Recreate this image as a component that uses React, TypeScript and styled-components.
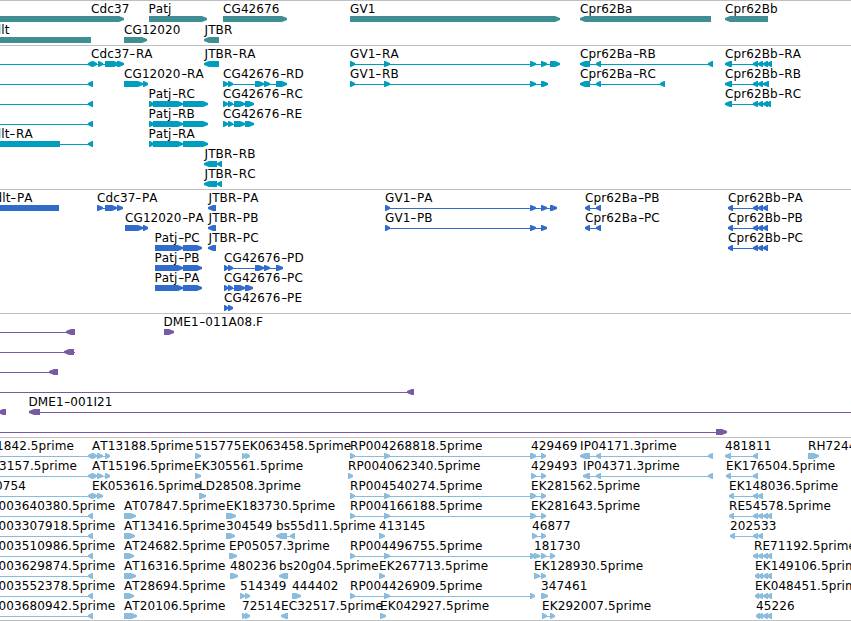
import React from 'react';
import styled, { createGlobalStyle } from 'styled-components';

type Exon = [number, number];

interface Feature {
  name?: string;
  x?: number;
  reverse?: boolean;
  exons: Exon[];
  span?: Exon;
}

interface TrackData {
  id: string;
  color: string;
  pitch: number;
  bottom: number;
  rows: Feature[][];
}

const TIP = 5;

// forward feature, label starts at the first exon unless x is given
const fwd = (name: string, exons: Exon[], x?: number): Feature => ({ name, exons, x });
const rev = (name: string, exons: Exon[], x?: number): Feature => ({ name, exons, x, reverse: true });

// feature that runs off the left edge, its last exon ends at b
const tail = (name: string, a: number, b: number, x?: number): Feature => ({
  name, x, reverse: true, exons: [[a, b]], span: [-10, b],
});

const cprRA: Exon[] = [[753, 758], [758, 763], [763, 768], [767, 772]];
const cprPA: Exon[] = [[728, 733], [753, 758], [758, 763], [763, 768]];
const patjR: Exon[] = [[149, 154], [153, 183], [183, 208]];
const patjP: Exon[] = [[155, 183], [183, 202]];
const cg426R: Exon[] = [[223, 228], [228, 233], [234, 245], [245, 254]];
const rpLong: Exon[] = [[350, 355], [384, 390], [530, 536]];

const tracks: TrackData[] = [
  {
    id: 'gene',
    color: '#3f8e94',
    pitch: 21,
    bottom: 1,
    rows: [
      [
        fwd('Cdc37', [[-10, 124]], 91), fwd('Patj', [[149, 207]], 148.5), fwd('CG42676', [[223, 287]]),
        fwd('GV1', [[350, 560]]), rev('Cpr62Ba', [[580, 711]]), rev('Cpr62Bb', [[725, 768]]),
      ],
      [rev('dlt', [[-10, 91]], -6.5), fwd('CG12020', [[124, 147]]), rev('JTBR', [[204, 219]], 204.5)],
    ],
  },
  {
    id: 'transcript',
    color: '#009dbf',
    pitch: 20,
    bottom: 2,
    rows: [
      [
        tail('', 88, 93), fwd('Cdc37-RA', [[92, 97], [98, 103], [105, 119], [117, 124]], 91),
        rev('JTBR-RA', [[204, 219]], 204.5),
        fwd('GV1-RA', [[350, 355], [384, 390], [530, 536], [541, 547], [550, 560]]),
        rev('Cpr62Ba-RB', [[580, 590], [596, 601], [708, 713]]),
        rev('Cpr62Bb-RA', [[725, 732], ...cprRA]),
      ],
      [
        tail('', 88, 93), fwd('CG12020-RA', [[124, 143], [143, 148]]),
        fwd('CG42676-RD', [[223, 228], [228, 233], [255, 264], [264, 270], [276, 287]]),
        fwd('GV1-RB', [[350, 355], [384, 390], [530, 536], [541, 548]]),
        rev('Cpr62Ba-RC', [[580, 590], [596, 601], [660, 665]]),
        rev('Cpr62Bb-RB', [[725, 732], [753, 758], [758, 763], [763, 769]]),
      ],
      [
        tail('', 88, 93), fwd('Patj-RC', patjR, 148.5), fwd('CG42676-RC', cg426R),
        rev('Cpr62Bb-RC', [[725, 732], [753, 758], [758, 763], [763, 768], [766, 771]]),
      ],
      [tail('', 88, 93), fwd('Patj-RB', patjR, 148.5), fwd('CG42676-RE', cg426R)],
      [rev('dlt-RA', [[-10, 60], [88, 93]], -6.5), fwd('Patj-RA', patjR, 148.5)],
      [rev('JTBR-RB', [[204, 217], [217, 222]], 204.5)],
      [rev('JTBR-RC', [[204, 217], [217, 222]], 204.5)],
    ],
  },
  {
    id: 'protein',
    color: '#316ccc',
    pitch: 20,
    bottom: 2,
    rows: [
      [
        rev('dlt-PA', [[-10, 59]], -5.5), fwd('Cdc37-PA', [[97, 103], [105, 117], [117, 123]]),
        rev('JTBR-PA', [[208, 216]], 208.5),
        fwd('GV1-PA', [[385, 390], [530, 536], [541, 547], [550, 557]]),
        rev('Cpr62Ba-PB', [[585, 590], [596, 601]]), rev('Cpr62Bb-PA', cprPA),
      ],
      [
        fwd('CG12020-PA', [[125, 143], [143, 148]]), rev('JTBR-PB', [[208, 216]], 208.5),
        fwd('GV1-PB', [[385, 390], [530, 536], [541, 547]]),
        rev('Cpr62Ba-PC', [[585, 590], [596, 601]]), rev('Cpr62Bb-PB', cprPA),
      ],
      [fwd('Patj-PC', patjP, 154.5), rev('JTBR-PC', [[208, 216]], 208.5), rev('Cpr62Bb-PC', cprPA)],
      [fwd('Patj-PB', patjP, 154.5), fwd('CG42676-PD', [[224, 228], [228, 233], [255, 264], [264, 270], [276, 283]])],
      [fwd('Patj-PA', patjP, 154.5), fwd('CG42676-PC', [[224, 228], [228, 233], [234, 245], [245, 253]])],
      [fwd('CG42676-PE', [[224, 228], [228, 233]])],
    ],
  },
  {
    id: 'insertion',
    color: '#7759a6',
    pitch: 20,
    bottom: 2,
    rows: [
      [tail('', 66, 75), fwd('DME1-011A08.F', [[164, 174]], 163.5)],
      [{ reverse: true, exons: [[64, 74]], span: [-10, 75] }],
      [tail('', 49, 58)],
      [tail('', 407, 414)],
      [rev('', [[-2, 6]]), { name: 'DME1-001I21', x: 28.5, reverse: true, exons: [[29, 40]], span: [29, 860] }],
      [{ exons: [[716, 727]], span: [-10, 727] }],
    ],
  },
  {
    id: 'est',
    color: '#8abddd',
    pitch: 20,
    bottom: 1,
    rows: [
      [
        tail('1842.5prime', 88, 93, -4), fwd('AT13188.5prime', [[92, 97], [97, 103], [105, 110]]),
        fwd('515775', [[195, 201]]), fwd('EK063458.5prime', [[242, 246], [245, 250]]),
        fwd('RP004268818.5prime', rpLong), fwd('429469', [[531, 536], [541, 546]]),
        rev('IP04171.3prime', [[580, 590], [596, 601], [708, 713]]),
        rev('481811', [[725, 731], [753, 758]]), fwd('RH72441', [[808, 819]]),
      ],
      [
        tail('3157.5prime', 88, 93, -1), fwd('AT15196.5prime', [[92, 97], [97, 103], [105, 110]]),
        fwd('EK305561.5prime', [[195, 201]], 194), fwd('RP004062340.5prime', [[348, 353]]),
        fwd('429493', [[531, 536], [541, 546]]),
        rev('IP04371.3prime', [[583, 590], [596, 601], [708, 713]]),
        rev('EK176504.5prime', [[726, 731], [753, 758]]),
      ],
      [
        tail('0754', 88, 93, -5), fwd('EK053616.5prime', [[92, 97], [97, 103]]),
        fwd('LD28508.3prime', [[199, 206]]), fwd('RP004540274.5prime', rpLong),
        fwd('EK281562.5prime', [[531, 536], [541, 546]]),
        rev('EK148036.5prime', [[729, 734], [753, 758], [758, 763]]),
      ],
      [
        tail('003640380.5prime', 88, 93, -1.5), fwd('AT07847.5prime', [[124, 136]]),
        fwd('EK183730.5prime', [[226, 236]]), fwd('RP004166188.5prime', rpLong),
        fwd('EK281643.5prime', [[531, 536], [541, 546]]), rev('RE54578.5prime', [[729, 734], ...cprRA]),
      ],
      [
        tail('003307918.5prime', 88, 93, -1.5), fwd('AT13416.5prime', [[124, 135]]),
        fwd('304549', [[226, 235]]), rev('bs55d11.5prime', [[276, 287], [290, 295]]),
        fwd('413145', [[379, 385]]), fwd('46877', [[532, 537], [541, 546]]),
        rev('202533', [[730, 735], [753, 758], [758, 763]]),
      ],
      [
        tail('003510986.5prime', 88, 93, -1.5), fwd('AT24682.5prime', [[124, 134]]),
        fwd('EP05057.3prime', [[229, 237]]), fwd('RP004496755.5prime', rpLong),
        fwd('181730', [[534, 540], [541, 546], [550, 555]]), rev('RE71192.5prime', cprRA, 754),
      ],
      [
        tail('003629874.5prime', 88, 93, -1.5), fwd('AT16316.5prime', [[124, 136]]),
        fwd('480236', [[230, 238]]), rev('bs20g04.5prime', [[279, 288]]),
        fwd('EK267713.5prime', [[379, 385]]), fwd('EK128930.5prime', [[534, 540], [541, 546]]),
        rev('EK149106.5prime', [[755, 759], ...cprRA.slice(1)]),
      ],
      [
        tail('003552378.5prime', 88, 93, -1.5), fwd('AT28694.5prime', [[124, 134]]),
        fwd('514349', [[240, 245], [245, 250]]), fwd('444402', [[292, 301]]),
        fwd('RP004426909.5prime', [[350, 355], [384, 390], [530, 535]]), fwd('347461', [[541, 548]]),
        rev('EK048451.5prime', [[755, 759], ...cprRA.slice(1)]),
      ],
      [
        tail('003680942.5prime', 88, 93, -1.5), fwd('AT20106.5prime', [[124, 137]]),
        fwd('72514', [[242, 246], [245, 250]]), rev('EC32517.5prime', [[281, 288]]),
        fwd('EK042927.5prime', [[380, 386]]), fwd('EK292007.5prime', [[542, 547], [550, 555]]),
        rev('45226', [[756, 760], ...cprRA.slice(1)]),
      ],
    ],
  },
];

// a short exon keeps one full-height column behind its tip
const exonPoints = ([a, b]: Exon, reverse?: boolean): string => {
  const tip = Math.min(TIP, b - a - 1);
  return reverse
    ? `${b},0 ${a + tip},0 ${a},2 ${a},4 ${a + tip},6 ${b},6`
    : `${a},0 ${b - tip},0 ${b},2 ${b},4 ${b - tip},6 ${a},6`;
};

const FeatureGlyph = ({ feature }: { feature: Feature }) => {
  const { exons, reverse, span } = feature;
  const [from, to] = span || [exons[0][0], exons[exons.length - 1][1]];

  return (
    <g>
      <rect x={from} y={3} width={to - from} height={1} />
      {exons.map((exon, i) => <polygon key={i} points={exonPoints(exon, reverse)} />)}
    </g>
  );
};

const FeatureName = ({ name }: { name: string }) => {
  const [base, suffix] = name.split('-');
  return <>{base}{suffix && <><Dash>-</Dash>{suffix}</>}</>;
};

const TrackRow = ({ features, pitch }: { features: Feature[]; pitch: number }) => (
  <Row $pitch={pitch}>
    {features.map((f) => f.name && (
      <Label key={f.name} style={{ left: f.x ?? f.exons[0][0] }}><FeatureName name={f.name} /></Label>
    ))}
    <Glyphs width={851} height={6}>
      {features.map((f, i) => <FeatureGlyph key={i} feature={f} />)}
    </Glyphs>
  </Row>
);

const App = () => (
  <>
    <GlobalStyle />
    <Browser>
      {tracks.map((track) => (
        <Track key={track.id} $color={track.color} $bottom={track.bottom}>
          {track.rows.map((row, i) => <TrackRow key={i} features={row} pitch={track.pitch} />)}
        </Track>
      ))}
    </Browser>
  </>
);

const GlobalStyle = createGlobalStyle`
  body {
    margin: 0;
    background: #fff;
    overflow: hidden;
  }
`;

const Browser = styled.main`
  width: 851px;
  overflow: hidden;
  border-bottom: 1px solid #bfbfbf;
  font-family: 'DejaVu Sans', sans-serif;
  font-size: 12px;
  font-kerning: none;
  color: #000;
`;

const Track = styled.section<{ $color: string; $bottom: number }>`
  border-top: 1px solid #bfbfbf;
  padding: 1px 0 ${({ $bottom }) => $bottom}px;
  fill: ${({ $color }) => $color};
`;

const Row = styled.div<{ $pitch: number }>`
  position: relative;
  height: ${({ $pitch }) => $pitch}px;
  padding-top: 14px;
  box-sizing: border-box;
`;

// labels sit over the row at the genomic position of their feature
const Label = styled.span`
  position: absolute;
  top: 0;
  line-height: 14px;
  letter-spacing: 0.1px;
  white-space: nowrap;
`;

const Dash = styled.span`
  display: inline-block;
  width: 6.5px;
  text-align: center;
  transform: scaleX(1.4);
`;

const Glyphs = styled.svg`
  display: block;
`;

export default App;
